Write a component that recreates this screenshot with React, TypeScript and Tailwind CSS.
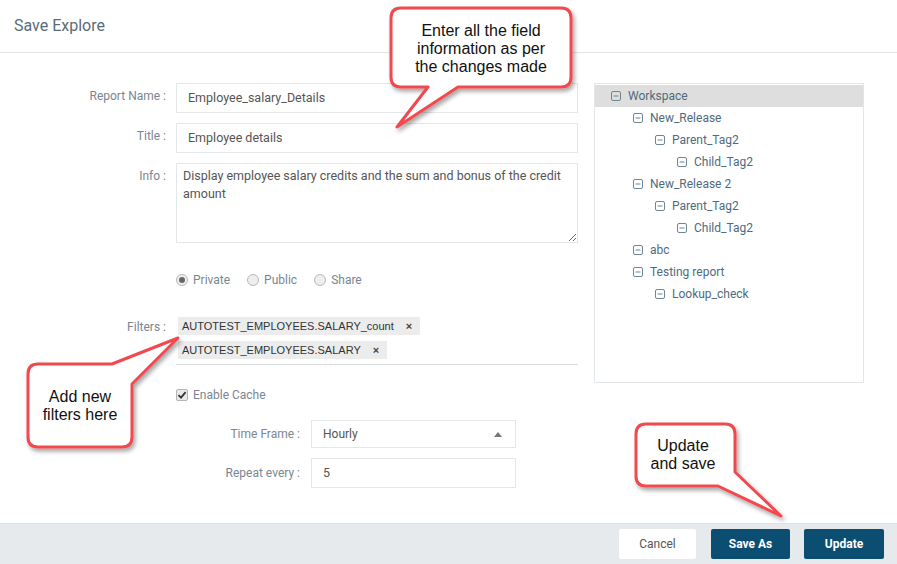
import React from "react";

const tree = [
  { label: "Workspace", depth: 0, active: true },
  { label: "New_Release", depth: 1 },
  { label: "Parent_Tag2", depth: 2 },
  { label: "Child_Tag2", depth: 3 },
  { label: "New_Release 2", depth: 1 },
  { label: "Parent_Tag2", depth: 2 },
  { label: "Child_Tag2", depth: 3 },
  { label: "abc", depth: 1 },
  { label: "Testing report", depth: 1 },
  { label: "Lookup_check", depth: 2 },
];

const indent = ["pl-[16px]", "pl-[38px]", "pl-[60px]", "pl-[82px]"];

const MinusBox = () => (
  <svg width="10" height="10" viewBox="0 0 10 10" className="shrink-0">
    <rect x="0.5" y="0.5" width="9" height="9" rx="1.5" fill="none" stroke="#6f8594" />
    <line x1="2.5" y1="5" x2="7.5" y2="5" stroke="#6f8594" />
  </svg>
);

const Radio = ({ checked, label }: { checked?: boolean; label: string }) => (
  <label className="flex items-center gap-[5px]">
    <span className="w-[12px] h-[12px] rounded-full border border-[#b9b9b9] bg-[#eeeeee] flex items-center justify-center">
      {checked && <span className="w-[6px] h-[6px] rounded-full bg-[#666]" />}
    </span>
    <span>{label}</span>
  </label>
);

const Chip = ({ text }: { text: string }) => (
  <div className="h-[18px] bg-[#ececec] flex items-center pl-[4px] pr-[8px] text-[11px] text-[#333] font-['Liberation_Sans',Arial,sans-serif]">
    <span>{text}</span>
    <span className="ml-[12px] text-[11px] font-bold text-[#444]">×</span>
  </div>
);

const Callouts = () => (
  <>
    <svg width="897" height="564" className="absolute inset-0 pointer-events-none">
      <defs>
        <filter id="sh" x="-20%" y="-20%" width="140%" height="140%">
          <feDropShadow dx="2" dy="3" stdDeviation="2" floodColor="#000" floodOpacity="0.35" />
        </filter>
      </defs>
      <g fill="#fff" stroke="#f24a50" strokeWidth="3" strokeLinejoin="round" filter="url(#sh)">
        <path d="M401,8 H561 Q571,8 571,18 V77 Q571,87 561,87 H458 L397,127 L428,87 H401 Q391,87 391,77 V18 Q391,8 401,8 Z" />
        <path d="M38,364 H112 L178,338 L132,384 V437 Q132,447 122,447 H38 Q28,447 28,437 V374 Q28,364 38,364 Z" />
        <path d="M646,424 H725 Q735,424 735,434 V472 L781,516 L718,486 H646 Q636,486 636,476 V434 Q636,424 646,424 Z" />
      </g>
    </svg>
    <div className="absolute left-[391px] top-[22px] w-[180px] text-center text-[16px] leading-[18px] text-[#111] font-['Liberation_Sans',Arial,sans-serif]">
      Enter all the field
      <br />
      information as per
      <br />
      the changes made
    </div>
    <div className="absolute left-[28px] top-[388px] w-[104px] text-center text-[16px] leading-[18px] text-[#111] font-['Liberation_Sans',Arial,sans-serif]">
      Add new
      <br />
      filters here
    </div>
    <div className="absolute left-[636px] top-[437px] w-[94px] text-center text-[16px] leading-[18px] text-[#111] font-['Liberation_Sans',Arial,sans-serif]">
      Update
      <br />
      and save
    </div>
  </>
);

export default function App() {
  return (
    <div className="relative w-[897px] h-[564px] bg-white overflow-hidden font-['Roboto',sans-serif] flex flex-col">
      {/* Header */}
      <div className="h-[53px] border-b border-[#e3e3e3] flex items-center px-[14px] shrink-0">
        <h1 className="text-[16px] text-[#5b6b77]">Save Explore</h1>
      </div>

      {/* Body */}
      <div className="flex-1 flex pt-[30px]">
        {/* Form */}
        <div className="flex flex-col">
          <div className="flex items-start">
            <span className="w-[166px] text-right text-[12px] text-[#7a8692] pt-[4px]">Report Name :</span>
            <div className="ml-[10px] w-[402px] h-[30px] border border-[#e3e7ea] flex items-center pl-[11px] text-[12.5px] text-[#555]">
              Employee_salary_Details
            </div>
          </div>
          <div className="flex items-start mt-[10px]">
            <span className="w-[166px] text-right text-[12px] text-[#7a8692] pt-[4px]">Title :</span>
            <div className="ml-[10px] w-[402px] h-[30px] border border-[#e3e7ea] flex items-center pl-[11px] text-[12.5px] text-[#555]">
              Employee details
            </div>
          </div>
          <div className="flex items-start mt-[10px]">
            <span className="w-[166px] text-right text-[12px] text-[#7a8692] pt-[4px]">Info :</span>
            <textarea
              readOnly
              className="ml-[10px] w-[402px] h-[80px] border border-[#e3e7ea] px-[6px] pt-[3px] text-[12.5px] leading-[18px] text-[#555] outline-none"
              defaultValue="Display employee salary credits and the sum and bonus of the credit amount"
            />
          </div>

          <div className="flex gap-[17px] ml-[176px] mt-[28px] text-[12px] text-[#7a8692]">
            <Radio checked label="Private" />
            <Radio label="Public" />
            <Radio label="Share" />
          </div>

          <div className="flex items-start mt-[28px]">
            <span className="w-[166px] text-right text-[12px] text-[#7a8692] pt-[1px]">Filters :</span>
            <div className="ml-[10px] w-[402px] border-b border-[#d9dcdf] pl-[2px] pb-[5px] flex flex-col gap-[6px]">
              <div className="flex">
                <Chip text="AUTOTEST_EMPLOYEES.SALARY_count" />
              </div>
              <div className="flex">
                <Chip text="AUTOTEST_EMPLOYEES.SALARY" />
              </div>
            </div>
          </div>

          <label className="flex items-center gap-[5px] ml-[176px] mt-[21px] text-[12px] text-[#7a8692]">
            <span className="w-[12px] h-[12px] rounded-[2px] border border-[#b5b5b5] bg-[#e9e9e9] flex items-center justify-center">
              <svg width="10" height="10" viewBox="0 0 10 10">
                <path d="M1.5 5.2 L4 7.6 L8.6 2.2" fill="none" stroke="#333" strokeWidth="1.8" />
              </svg>
            </span>
            <span>Enable Cache</span>
          </label>

          <div className="flex items-center mt-[16px]">
            <span className="w-[300px] text-right text-[12px] text-[#7a8692]">Time Frame :</span>
            <div className="ml-[11px] w-[205px] h-[28px] border border-[#e3e7ea] flex items-center justify-between pl-[11px] pr-[13px] text-[12px] text-[#555]">
              <span>Hourly</span>
              <svg width="8" height="5" viewBox="0 0 8 5">
                <path d="M0 5 L4 0 L8 5 Z" fill="#777" />
              </svg>
            </div>
          </div>
          <div className="flex items-center mt-[10px]">
            <span className="w-[300px] text-right text-[12px] text-[#7a8692]">Repeat every :</span>
            <div className="ml-[11px] w-[205px] h-[30px] border border-[#e3e7ea] flex items-center pl-[11px] text-[12.5px] text-[#555]">
              5
            </div>
          </div>
        </div>

        {/* Tree */}
        <div className="ml-[16px] w-[270px] h-[300px] border border-[#e3e6e8] pt-[1px]">
          {tree.map((t, i) => (
            <div
              key={i}
              className={`h-[22px] flex items-center gap-[7px] text-[12px] text-[#4f6b7c] ${indent[t.depth]} ${
                t.active ? "bg-[#dedede]" : ""
              }`}
            >
              <MinusBox />
              <span>{t.label}</span>
            </div>
          ))}
        </div>
      </div>

      {/* Footer */}
      <div className="h-[41px] bg-[#e6eaed] border-t border-[#dde2e6] flex items-center justify-end pr-[13px] shrink-0">
        <button className="w-[77px] h-[30px] bg-white rounded-[2px] text-[12px] text-[#555]">Cancel</button>
        <button className="ml-[15px] w-[79px] h-[30px] bg-[#0c4e72] rounded-[2px] text-[12px] font-bold text-white">
          Save As
        </button>
        <button className="ml-[14px] w-[80px] h-[30px] bg-[#0c4e72] rounded-[2px] text-[12px] font-bold text-white">
          Update
        </button>
      </div>

      <Callouts />
    </div>
  );
}
